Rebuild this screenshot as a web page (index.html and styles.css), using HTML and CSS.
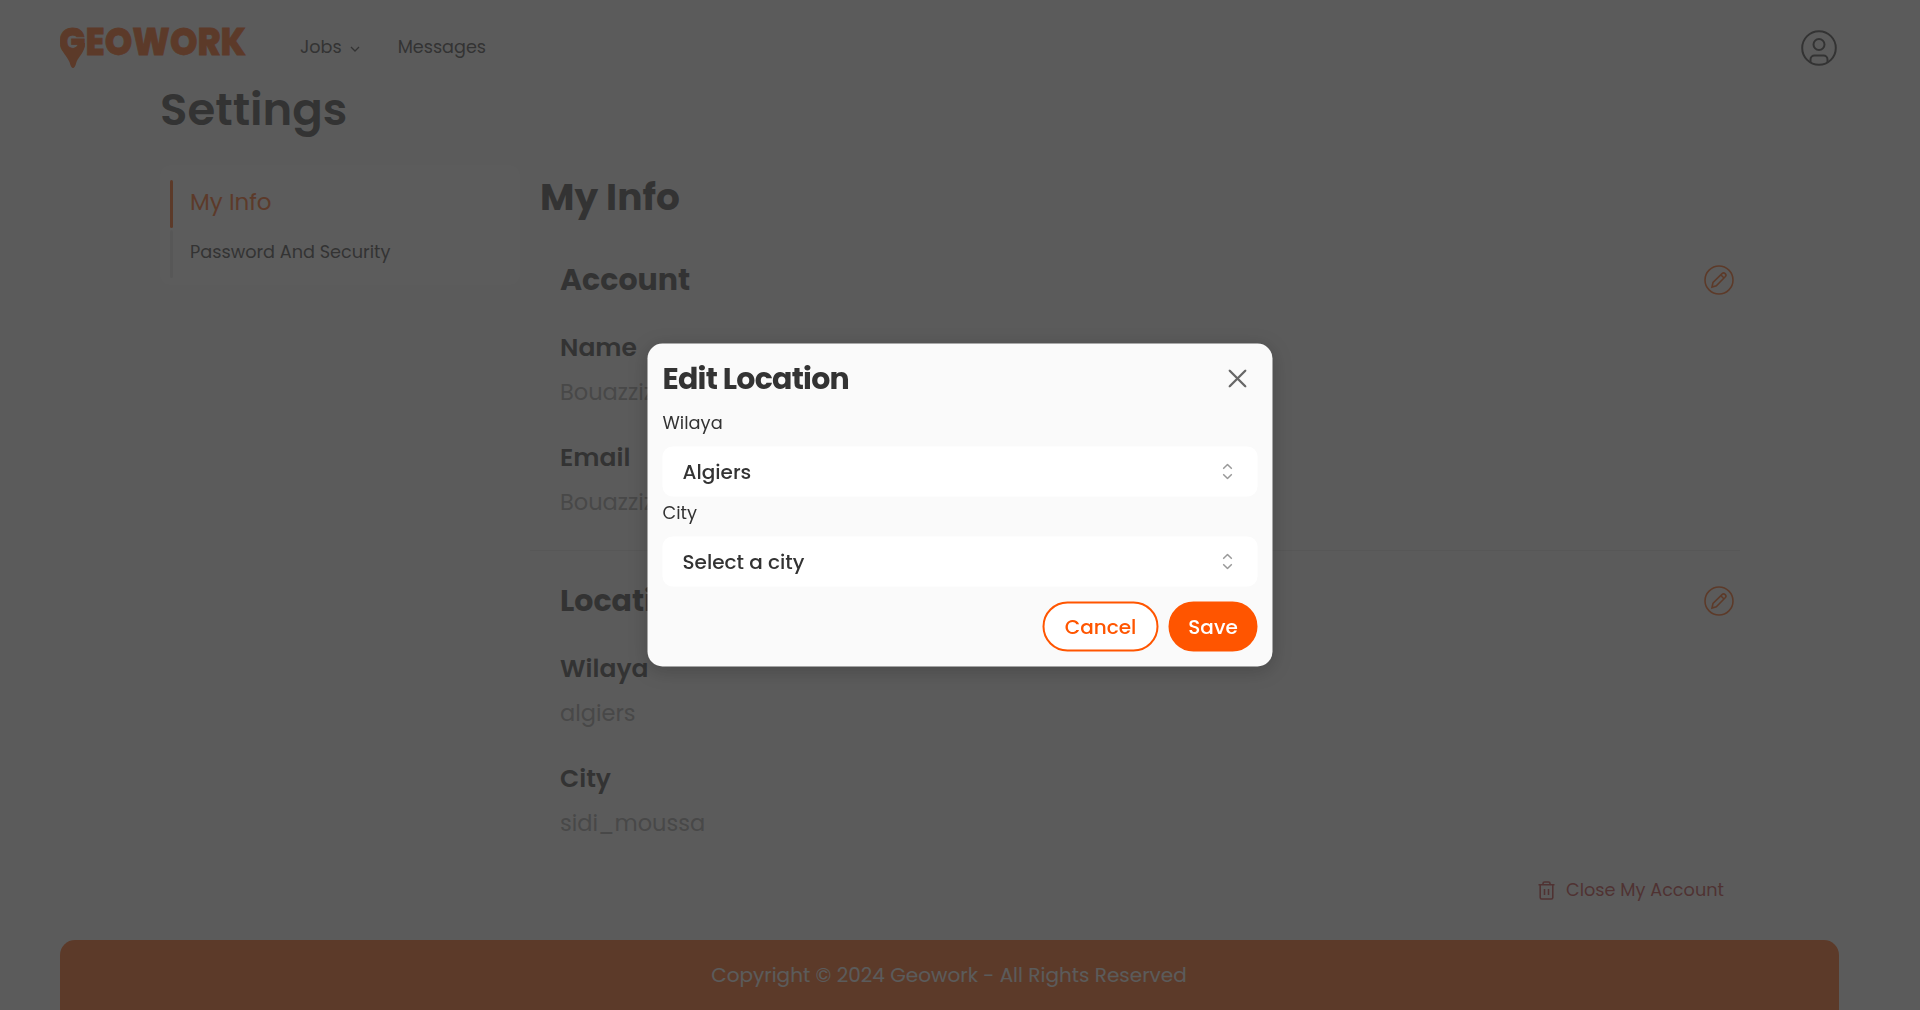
FILE: index.html
```html
<!DOCTYPE html>
<html lang="en">
<head>
<meta charset="utf-8">
<title>Geowork - Settings</title>
<link rel="stylesheet" href="styles.css">
</head>
<body>
<div class="page">
  <header class="topbar">
    <svg class="logo" viewBox="0 0 200 70" role="img" aria-label="Geowork">
      <text class="logo-text" x="-1" y="49.500" textLength="187" lengthAdjust="spacingAndGlyphs">GEOWORK</text>
      <path d="M.500 40C2 48 7 51 9.500 57Q11 63 13 63Q15 63 16.500 57C19 51 25 47 25 38L21 38L13 45Z"/>
    </svg>
    <nav class="nav">
      <a class="nav-link"><span>Jobs</span><svg class="chevron" viewBox="0 0 10 6"><path d="M1 1l4 4 4-4"/></svg></a>
      <a class="nav-link"><span>Messages</span></a>
    </nav>
    <svg class="avatar" viewBox="0 0 36 36"><circle cx="18" cy="18" r="16.800"/><circle cx="18" cy="14.500" r="5.500"/><path d="M9.500 32v-2.500a4 4 0 0 1 4-4h9a4 4 0 0 1 4 4v2.500"/></svg>
  </header>

  <h1 class="page-title">Settings</h1>

  <div class="content">
    <aside class="sidebar">
      <a class="tab tab-active"><span>My Info</span></a>
      <a class="tab"><span>Password And Security</span></a>
    </aside>
    <main class="main">
      <h2 class="main-title">My Info</h2>
      <section class="section">
        <div class="section-head"><h3>Account</h3>
          <svg class="edit" viewBox="0 0 30 30"><circle cx="15" cy="15" r="14"/><path d="M8 22l1-4.500L18 8.600a2.200 2.200 0 0 1 3.200 3.200L12.300 20.800zM16.800 9.800l3.200 3.200"/></svg></div>
        <div class="field"><h4>Name</h4><p>Bouazzizi</p></div>
        <div class="field"><h4>Email</h4><p>Bouazzizi</p></div>
      </section>
      <section class="section section-divided">
        <div class="section-head"><h3>Location</h3>
          <svg class="edit" viewBox="0 0 30 30"><circle cx="15" cy="15" r="14"/><path d="M8 22l1-4.500L18 8.600a2.200 2.200 0 0 1 3.200 3.200L12.300 20.800zM16.800 9.800l3.200 3.200"/></svg></div>
        <div class="field"><h4>Wilaya</h4><p>algiers</p></div>
        <div class="field"><h4>City</h4><p>sidi_moussa</p></div>
      </section>
      <a class="close-account">
        <svg class="trash" viewBox="0 0 17 19"><path d="M.5 3.800h16M2.200 3.800v12.700q0 1.500 1.500 1.500h9.600q1.500 0 1.500-1.500V3.800M5 3.800V2.500Q5 1 6.500 1h4Q12 1 12 2.500v1.300M6.500 8v6M10.500 8v6"/></svg>
        <span>Close My Account</span>
      </a>
    </main>
  </div>

  <footer class="footer">Copyright © 2024 Geowork - All Rights Reserved</footer>
</div>

<div class="overlay">
  <div class="modal" role="dialog">
    <div class="modal-head">
      <h2>Edit Location</h2>
      <svg class="dismiss" viewBox="0 0 18 18"><path d="M1 1l16 16M17 1L1 17"/></svg>
    </div>
    <label class="label">Wilaya</label>
    <div class="select"><span>Algiers</span><svg class="updown" viewBox="0 0 10 16"><path d="M.7 5.300L5 1l4.300 4.300M.7 10.700L5 15l4.300-4.300"/></svg></div>
    <label class="label label-second">City</label>
    <div class="select"><span>Select a city</span><svg class="updown" viewBox="0 0 10 16"><path d="M.7 5.300L5 1l4.300 4.300M.7 10.700L5 15l4.300-4.300"/></svg></div>
    <div class="actions">
      <button class="btn btn-outline">Cancel</button>
      <button class="btn btn-solid">Save</button>
    </div>
  </div>
</div>
</body>
</html>
```
FILE: styles.css
```css
* { box-sizing: border-box; margin: 0; padding: 0; }
body { font-family: Poppins, Inter, sans-serif; color: #333; background: #f9f9f9; height: 1010px; overflow: hidden; }
span, h4, p { white-space: nowrap; }
svg { display: block; fill: none; stroke: currentColor; flex: none; }
.page { display: flex; flex-direction: column; height: 1010px; }
.topbar { display: flex; align-items: center; height: 80px; padding: 0 83px 0 60px; }
.logo { width: 200px; height: 70px; color: #f50; fill: currentColor; stroke: none; }
.logo-text { font: 800 38px Poppins, Inter, sans-serif; stroke: currentColor; stroke-width: .8px; }
.nav { display: flex; gap: 38px; margin-left: 40px; margin-top: 14px; flex: 1; font-size: 17.6px; line-height: 28px; }
.nav-link { display: flex; align-items: center; gap: 8px; }
.chevron { width: 10px; height: 6px; margin-top: 3px; stroke-width: 1.3; }
.avatar { width: 36px; height: 36px; margin-top: 16px; stroke-width: 2; }
.page-title { padding-left: 160px; height: 60px; line-height: 60px; font-size: 45px; font-weight: 600; }
.content { display: flex; gap: 20px; margin: 25px 180px 0 160px; height: 775px; }
.sidebar { width: 360px; height: 120px; padding: 15px 10px; border-radius: 10px; background: #fcfcfc; display: flex; flex-direction: column; gap: 2px; }
.tab { display: flex; align-items: center; height: 48px; font-size: 17.7px; }
.tab span { margin-top: -6px; }
.tab::before { content: ""; width: 3px; height: 48px; border-radius: 2px; background: #e6e6e6; margin-right: 17px; }
.tab-active { color: #f50; font-size: 23px; }
.tab-active span { margin-top: -4px; }
.tab-active::before { background: #f50; }
.main { flex: 1; display: flex; flex-direction: column; }
.main-title { height: 64px; line-height: 64px; font-size: 37.5px; font-weight: 700; }
.section { padding: 20px 6px 0 20px; height: 321px; }
.section-divided { border-top: 1px solid #e6e6e6; padding-top: 19px; margin-left: -10px; padding-left: 30px; }
.section-head { display: flex; justify-content: space-between; align-items: center; height: 62px; }
.section-head h3 { font-size: 30px; font-weight: 700; }
.edit { width: 30px; height: 30px; color: #f50; stroke-width: 1.6; }
.field { height: 110px; padding-top: 18px; }
.field h4 { height: 38px; line-height: 38px; font-size: 25px; font-weight: 600; }
.field p { height: 34px; line-height: 34px; margin-top: 7.500px; font-size: 22.5px; font-weight: 400; color: #999; }
.close-account { align-self: flex-end; display: flex; align-items: center; gap: 11px; height: 50px; margin: -7px 16px 0 0; font-size: 17.700px; color: #bf2f2f; }
.trash { width: 17px; height: 19px; stroke-width: 1.6; margin-top: 2px; }
.footer { margin: 0 81px 0 60px; flex: 1; border-radius: 15px 15px 0 0; background: #f50; color: #f9f9f9; font-size: 20px; text-align: center; line-height: 70px; padding-right: 1px; }

.overlay { position: fixed; inset: 0; display: flex; align-items: center; justify-content: center; padding: 0 1px 1px 0; background: rgba(51, 51, 51, .8); }
.modal { width: 625px; height: 323px; padding: 15px; border-radius: 15px; background: #fafafa; box-shadow: 0 4px 20px rgba(0, 0, 0, .2); display: flex; flex-direction: column; transform: translate(.5px, .5px); }
.modal-head { display: flex; justify-content: space-between; align-items: center; height: 40px; padding-right: 11px; }
.modal-head h2 { font-size: 30px; font-weight: 700; letter-spacing: -.75px; }
.dismiss { width: 18px; height: 18px; color: #666; stroke-width: 2.3; stroke-linecap: round; }
.label { height: 27px; line-height: 27px; margin: 10px 0 11px; font-size: 17.800px; }
.label-second { margin: 2px 0 11px; }
.select { display: flex; align-items: center; justify-content: space-between; height: 50px; padding: 0 25px 0 20px; border-radius: 10px; background: #fff; font-size: 20px; font-weight: 500; }
.updown { width: 10px; height: 16px; color: #999; stroke-width: 1.5; }
.actions { display: flex; justify-content: flex-end; gap: 10px; margin-top: 15px; }
.btn { height: 50px; border-radius: 25px; font: 500 20px Poppins, Inter, sans-serif; border: 2px solid #f50; }
.btn-outline { width: 116px; background: #fff; color: #f50; }
.btn-solid { width: 89px; background: #f50; color: #fff; }
```
